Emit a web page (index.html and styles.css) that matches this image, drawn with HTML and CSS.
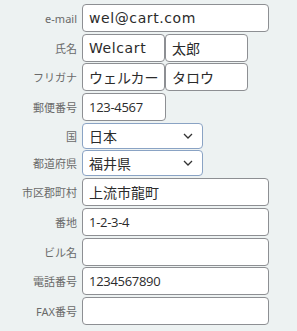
FILE: index.html
```html
<!DOCTYPE html>
<html lang="ja">
<head>
    <meta charset="UTF-8">
    <title>お客様情報</title>
    <link rel="stylesheet" href="styles.css">
</head>
<body>
    <form class="customer-form">
        <label class="label">e-mail</label>
        <div class="field"><input class="text wide latin" type="text" value="wel@cart.com"></div>

        <label class="label">氏名</label>
        <div class="field">
            <input class="text half latin" type="text" value="Welcart">
            <input class="text half" type="text" value="太郎">
        </div>

        <label class="label">フリガナ</label>
        <div class="field">
            <input class="text half" type="text" value="ウェルカート">
            <input class="text half" type="text" value="タロウ">
        </div>

        <label class="label">郵便番号</label>
        <div class="field"><input class="text zip num" type="text" value="123-4567"></div>

        <label class="label">国</label>
        <div class="field">
            <select class="select">
                <option>日本</option>
            </select>
        </div>

        <label class="label">都道府県</label>
        <div class="field">
            <select class="select">
                <option>福井県</option>
            </select>
        </div>

        <label class="label">市区郡町村</label>
        <div class="field"><input class="text wide" type="text" value="上流市龍町"></div>

        <label class="label">番地</label>
        <div class="field"><input class="text wide num" type="text" value="1-2-3-4"></div>

        <label class="label">ビル名</label>
        <div class="field"><input class="text wide" type="text" value=""></div>

        <label class="label">電話番号</label>
        <div class="field"><input class="text wide num" type="text" value="1234567890"></div>

        <label class="label">FAX番号</label>
        <div class="field"><input class="text wide" type="text" value=""></div>
    </form>
</body>
</html>
```
FILE: styles.css
```css
* {
    margin: 0;
    padding: 0;
    box-sizing: border-box;
}

body {
    background-color: #edf2f2;
    font-family: "Noto Sans", "Noto Sans CJK JP", sans-serif;
    padding-top: 4px;
}

.customer-form {
    display: grid;
    grid-template-columns: 77px 1fr;
    column-gap: 5px;
    row-gap: 1.7px;
}

.label {
    display: flex;
    align-items: center;
    justify-content: flex-end;
    font-size: 11px;
    color: #6a6a6a;
}

.field {
    display: flex;
}

.text {
    height: 28px;
    border: 1px solid #8d8f93;
    border-radius: 4px;
    background-color: #fff;
    padding: 0 6px;
    font-family: "Noto Sans CJK JP", sans-serif;
    font-size: 14px;
    color: #2b2b2b;
    outline: none;
}

/* latin text is wide in the original font */
.latin {
    font-family: "DejaVu Sans", "Noto Sans CJK JP", sans-serif;
    letter-spacing: 0.6px;
}

/* digits are narrow */
.num {
    font-family: "Open Sans", "Noto Sans CJK JP", sans-serif;
    font-size: 13px;
    letter-spacing: -0.3px;
}

.wide {
    width: 187px;
}

.half {
    width: 83px;
}

.zip {
    width: 84px;
}

.select {
    width: 121px;
    height: 26px;
    border: 1px solid #8aa3c4;
    border-radius: 4px;
    background-color: #fff;
    padding: 0 6px;
    font-family: "Noto Sans CJK JP", sans-serif;
    font-size: 14px;
    color: #2b2b2b;
    appearance: none;
    background-image: url("data:image/svg+xml,%3Csvg xmlns='http://www.w3.org/2000/svg' width='10' height='6' viewBox='0 0 10 6'%3E%3Cpath d='M1 1l4 4 4-4' fill='none' stroke='%23333' stroke-width='1.3'/%3E%3C/svg%3E");
    background-repeat: no-repeat;
    background-position: right 9px center;
}
```
